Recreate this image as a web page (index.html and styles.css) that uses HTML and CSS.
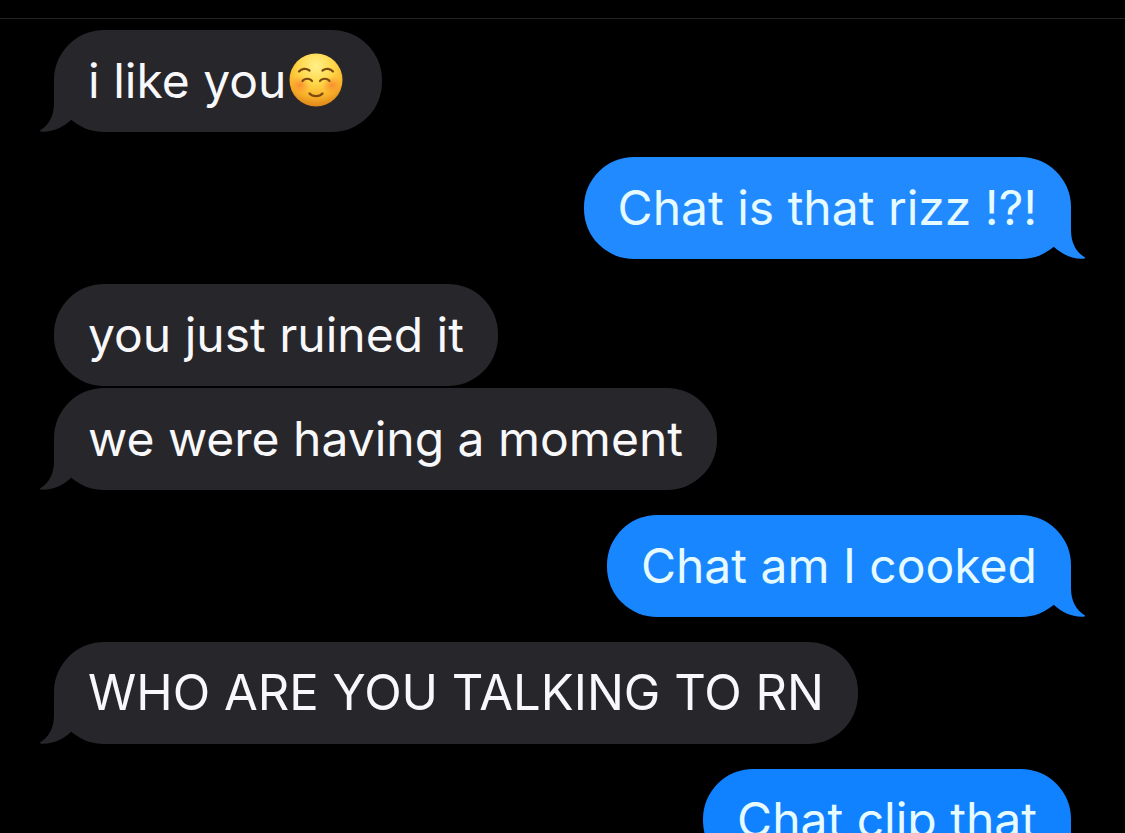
FILE: index.html
```html
<!DOCTYPE html>
<html lang="en">
<head>
<meta charset="utf-8">
<meta name="viewport" content="width=device-width, initial-scale=1">
<title>Messages</title>
<link rel="stylesheet" href="styles.css">
</head>
<body>
<svg class="defs" aria-hidden="true">
  <symbol id="tail" viewBox="0 0 62 52">
    <path d="M14 0V23C14 36 9 45 0 50.500C-.5 51.300 0 51.700 2 51.700C14 52 23 47 31 40L62 20V0Z"/>
  </symbol>
</svg>
<header class="topbar"></header>
<main class="thread">
  <section class="group received">
    <p class="bubble tailed">i like you<svg class="emoji" viewBox="0 0 54 54" role="img" aria-label="smiling face">
      <defs>
        <radialGradient id="face" cx="50%" cy="24%" r="80%">
          <stop offset="0" stop-color="#fff08a"/>
          <stop offset=".4" stop-color="#ffd84a"/>
          <stop offset=".72" stop-color="#f9b22a"/>
          <stop offset="1" stop-color="#d87c16"/>
        </radialGradient>
        <radialGradient id="blush">
          <stop offset="0" stop-color="#f9702c" stop-opacity=".65"/>
          <stop offset="1" stop-color="#f9852c" stop-opacity="0"/>
        </radialGradient>
      </defs>
      <circle cx="27" cy="27" r="26.500" fill="url(#face)"/>
      <ellipse cx="11" cy="32" rx="10" ry="9" fill="url(#blush)"/>
      <ellipse cx="43" cy="32" rx="10" ry="9" fill="url(#blush)"/>
      <g fill="none" stroke="#7c4a10" stroke-linecap="round" stroke-width="2.200">
        <path d="M10 18.500C12.500 15.500 17 15 20.500 17.500M33.500 17.500C37 15 41.500 15.500 44 18.500"/>
        <path d="M13.500 28C15.500 25 21 25 23 28M31 28C33 25 38.500 25 40.500 28"/>
        <path d="M20.500 40.500C23.500 44 30.500 44 33.500 40.500"/>
      </g>
    </svg><svg class="tail" aria-hidden="true"><use href="#tail"/></svg></p>
  </section>
  <section class="group sent">
    <p class="bubble tailed light">Chat is that rizz !?!<svg class="tail" aria-hidden="true"><use href="#tail"/></svg></p>
  </section>
  <section class="group received">
    <p class="bubble">you just ruined it</p>
    <p class="bubble tailed">we were having a moment<svg class="tail" aria-hidden="true"><use href="#tail"/></svg></p>
  </section>
  <section class="group sent">
    <p class="bubble tailed">Chat am I cooked<svg class="tail" aria-hidden="true"><use href="#tail"/></svg></p>
  </section>
  <section class="group received">
    <p class="bubble tailed shout">WHO ARE YOU TALKING TO RN<svg class="tail" aria-hidden="true"><use href="#tail"/></svg></p>
  </section>
  <section class="group sent">
    <p class="bubble tailed deep">Chat clip that<svg class="tail" aria-hidden="true"><use href="#tail"/></svg></p>
  </section>
</main>
</body>
</html>
```
FILE: styles.css
```css
* {
  box-sizing: border-box;
}

body {
  margin: 0;
  height: 100vh;
  display: flex;
  flex-direction: column;
  overflow: hidden;
  background: #000;
  font-family: Inter, "Liberation Sans", sans-serif;
  font-size: 48px;
  line-height: 62px;
}

.defs {
  position: absolute;
  width: 0;
  height: 0;
}

.topbar {
  flex: none;
  height: 19px;
  border-bottom: 1px solid #242426;
}

.thread {
  flex: 1;
  min-height: 0;
  display: flex;
  flex-direction: column;
  gap: 25px;
  padding: 11px 54px 0;
  overflow: hidden;
}

.group {
  flex: none;
  display: flex;
  flex-direction: column;
  gap: 2px;
}

.received {
  --fill: #27262b;
  align-items: flex-start;
  color: #f8f8fb;
}

.sent {
  --fill: #1886ff;
  align-items: flex-end;
  color: #e6fbff;
}

.bubble {
  position: relative;
  margin: 0;
  padding: 20px 34px;
  border-radius: 50px;
  background: var(--fill);
}

.light {
  --fill: #218aff;
}

.deep {
  --fill: #1082ff;
}

.shout {
  font-size: 49px;
}

.tail {
  position: absolute;
  z-index: -1;
  left: -14px;
  bottom: 0;
  width: 62px;
  height: 52px;
  fill: var(--fill);
  overflow: visible;
}

.sent .tail {
  left: auto;
  right: -14px;
  transform: scaleX(-1);
}

.emoji {
  width: 54px;
  height: 54px;
  margin: 0 5px 0 3px;
  vertical-align: -9px;
}
```
